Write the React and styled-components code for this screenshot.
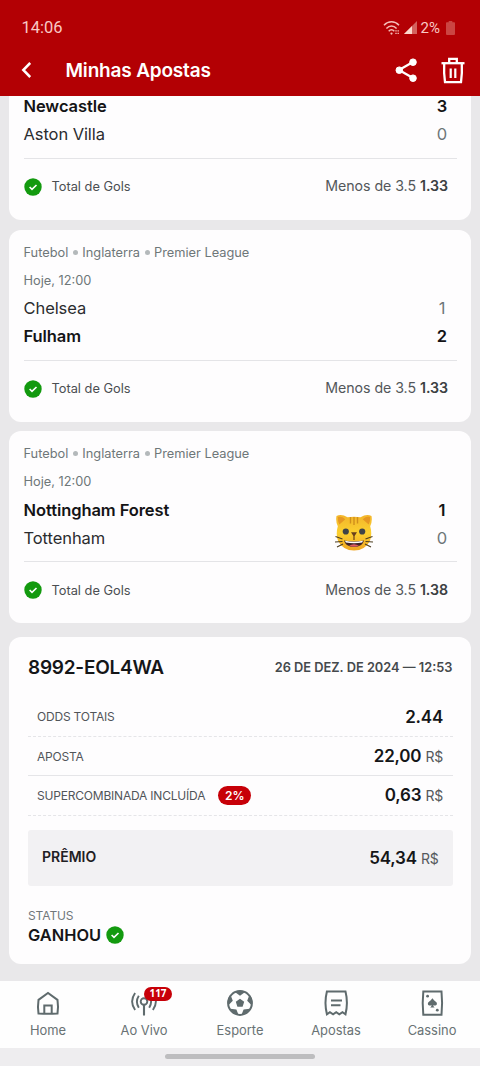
import styled, { createGlobalStyle } from "styled-components";

const GREY = "#5f6b6d";

const matches = [
  {
    id: 1,
    cut: true,
    teams: [
      { name: "Newcastle", score: 3, win: true },
      { name: "Aston Villa", score: 0 },
    ],
    odd: "1.33",
  },
  {
    id: 2,
    teams: [
      { name: "Chelsea", score: 1 },
      { name: "Fulham", score: 2, win: true },
    ],
    odd: "1.33",
  },
  {
    id: 3,
    cat: true,
    teams: [
      { name: "Nottingham Forest", score: 1, win: true },
      { name: "Tottenham", score: 0 },
    ],
    odd: "1.38",
  },
];

const App = () => {
  return (
    <Page>
      <GlobalStyle />
      <Header>
        <StatusBar>
          <Clock>14:06</Clock>
          <StatusIcons>
            <WifiIcon />
            <SignalIcon />
            <Percent>2%</Percent>
            <BatteryIcon />
          </StatusIcons>
        </StatusBar>
        <TitleBar>
          <BackIcon />
          <Title>Minhas Apostas</Title>
          <ShareIcon />
          <TrashIcon />
        </TitleBar>
      </Header>
      <Content>
        {matches.map((m) => (
          <MatchCard key={m.id} match={m} />
        ))}
        <Ticket />
      </Content>
      <BottomNav />
      <GestureArea>
        <GestureBar />
      </GestureArea>
    </Page>
  );
};

const MatchCard = ({ match }) => (
  <Card $cut={match.cut}>
    {!match.cut && (
      <>
        <Meta>
          Futebol<Dot />Inglaterra<Dot />Premier League
        </Meta>
        <Meta>Hoje, 12:00</Meta>
      </>
    )}
    {match.teams.map((t) => (
      <TeamRow key={t.name}>
        <TeamName $win={t.win}>{t.name}</TeamName>
        <Score $win={t.win}>{t.score}</Score>
      </TeamRow>
    ))}
    <Divider />
    <Market>
      <CheckIcon />
      <MarketName>Total de Gols</MarketName>
      <Pick>
        Menos de 3.5 <b>{match.odd}</b>
      </Pick>
    </Market>
    {match.cat && <CatSticker />}
  </Card>
);

const Ticket = () => (
  <TicketCard>
    <TicketHead>
      <TicketId>8992-EOL4WA</TicketId>
      <TicketDate>26 DE DEZ. DE 2024 — 12:53</TicketDate>
    </TicketHead>
    <TicketRow $line="dashed">
      <Label>ODDS TOTAIS</Label>
      <Value>2.44</Value>
    </TicketRow>
    <TicketRow $line="solid">
      <Label>APOSTA</Label>
      <Value>
        22,00 <Currency>R$</Currency>
      </Value>
    </TicketRow>
    <TicketRow $line="dashed">
      <Label>SUPERCOMBINADA INCLUÍDA</Label>
      <Bonus>2%</Bonus>
      <Value>
        0,63 <Currency>R$</Currency>
      </Value>
    </TicketRow>
    <Prize>
      <PrizeLabel>PRÊMIO</PrizeLabel>
      <Value>
        54,34 <Currency>R$</Currency>
      </Value>
    </Prize>
    <StatusLabel>STATUS</StatusLabel>
    <StatusValue>
      <span>GANHOU</span>
      <CheckIcon />
    </StatusValue>
  </TicketCard>
);

const BottomNav = () => (
  <Nav>
    <NavItem>
      <HomeIcon />
      <NavText>Home</NavText>
    </NavItem>
    <NavItem>
      <LiveIcon />
      <Badge>117</Badge>
      <NavText>Ao Vivo</NavText>
    </NavItem>
    <NavItem>
      <BallIcon />
      <NavText>Esporte</NavText>
    </NavItem>
    <NavItem>
      <ReceiptIcon />
      <NavText>Apostas</NavText>
    </NavItem>
    <NavItem>
      <CardIcon />
      <NavText>Cassino</NavText>
    </NavItem>
  </Nav>
);

/* icons */

const WifiIcon = () => (
  <svg width="17" height="16" viewBox="0 0 17 16" fill="none" stroke="#f5bcb6" strokeWidth="1.5">
    <path d="M1 5.2C5.2 .7 11.8 .7 16 5.2" />
    <path d="M3.4 8.4c3-3.2 7.2-3.2 10.2 0" />
    <path d="M5.7 11.2c1.7-1.8 3.9-1.8 5.6 0" />
    <circle cx="8.5" cy="13.6" r="1.1" fill="#f5bcb6" stroke="none" />
    <path d="M12.3 10.8h1.4M14.5 10.8h1.4M12.3 13.4h1.4M14.5 13.4h1.4" strokeWidth="1.2" />
  </svg>
);

const SignalIcon = () => (
  <svg width="13" height="13" viewBox="0 0 13 13">
    <path d="M13 0v13H0z" fill="#d4625e" />
    <path d="M8 5v8H0z" fill="#fbd9cd" />
  </svg>
);

const BatteryIcon = () => (
  <svg width="9" height="14" viewBox="0 0 9 14">
    <path d="M2.7 0h3.6v1.3h1.9q.8 0 .8.8V13q0 1-1 1H1q-1 0-1-1V2.1q0-.8.8-.8h1.9z" fill="#cb4543" />
  </svg>
);

const BackIcon = () => (
  <svg width="10" height="16" viewBox="0 0 10 16" fill="none" stroke="#fff" strokeWidth="2.5">
    <path d="M9.2 1 2.3 8l6.9 7" />
  </svg>
);

const ShareIcon = () => (
  <svg width="22" height="24" viewBox="0 0 22 24" fill="#fff" stroke="#fff">
    <path d="M18 4 4 12l14 8" fill="none" strokeWidth="2.3" />
    <circle cx="18" cy="4.2" r="3.3" />
    <circle cx="4.3" cy="12.2" r="3.3" />
    <circle cx="18" cy="20.2" r="3.3" />
  </svg>
);

const TrashIcon = () => (
  <svg width="24" height="27" viewBox="0 0 24 27" fill="none" stroke="#fff" strokeWidth="2.3">
    <path d="M.5 6.2h23" />
    <path d="M8.2 5.7V1.9h7.6v3.8" />
    <path d="M3.2 6.5q-.5 9.500.8 18.700h16q1.300-9.200.8-18.700" />
    <path d="M9.700 11.500v9.500M14.300 11.500v9.500" strokeWidth="2.2" />
  </svg>
);

const CheckIcon = () => (
  <svg width="18" height="18" viewBox="0 0 18 18">
    <circle cx="9" cy="9" r="8.700" fill="#139a0f" />
    <path d="m5.600 9 2.400 2.300 4.500-4.300" fill="none" stroke="#fff" strokeWidth="1.6" />
  </svg>
);

const HomeIcon = () => (
  <svg width="28" height="28" viewBox="0 0 28 28" fill="none" stroke={GREY} strokeWidth="2">
    <path d="M4.500 10.900 14 4l9.500 6.900q1 6.800 0 13.600-9.500.7-19 0-1-6.800 0-13.600z" />
    <path d="M10.300 24.500v-8h7.400v8" />
  </svg>
);

const LiveIcon = () => (
  <svg width="28" height="28" viewBox="0 0 28 28" fill="none" stroke={GREY} strokeWidth="1.9">
    <circle cx="14" cy="12.500" r="3.300" />
    <path d="M14 16v10.500" strokeWidth="2.1" />
    <path d="M8.800 6.700q-3.800 6 0 12M5.100 4q-6 8.500 0 17" />
    <path d="M19.200 6.700q3.800 6 0 12M22.900 4q6 8.500 0 17" />
  </svg>
);

const BallIcon = () => (
  <svg width="28" height="28" viewBox="0 0 28 28">
    <circle cx="14" cy="14" r="11.900" fill="none" stroke={GREY} strokeWidth="2" />
    <path
      d="m14 9.800 4.200 3-1.600 5h-5.200l-1.600-5zM8.500 2.700l5.500 4 5.500-4Q14 .9 8.500 2.700zM23.600 5.500l-2.400 6.300 4.600 4.700Q27.200 10.500 23.600 5.500zM23.800 19.700l-6.200.8-2.200 5.400q5.400-.7 8.400-6.200zM4.200 19.700l6.200.8 2.200 5.400q-5.400-.7-8.400-6.200zM4.400 5.500l2.400 6.300-4.600 4.700Q.8 10.500 4.400 5.500z"
      fill={GREY}
    />
  </svg>
);

const ReceiptIcon = () => (
  <svg width="28" height="28" viewBox="0 0 28 28" fill="none" stroke={GREY} strokeWidth="2">
    <path d="M4.900 2.500h18.600q2.800 11 0 22.800l-3-2.100-3.200 2.200-3.100-2.200-3.100 2.200-3.200-2.200-3 2.100q-2.800-11.800 0-22.800z" />
    <path d="M9 11.500h11M9 16.200h9.500" />
  </svg>
);

const CardIcon = () => (
  <svg width="28" height="28" viewBox="0 0 28 28">
    <path d="M5.300 2.500h18.200q1.200 11.700 0 23.300H5.300q-1.200-11.600 0-23.300z" fill="none" stroke={GREY} strokeWidth="2" />
    <path
      d="M14.400 9.200q1.400 2 3.700 3.700c2.200 2-.4 5-2.900 3.100q.2 1.600 1.400 2.500h-4.400q1.200-.9 1.400-2.500c-2.500 1.900-5.100-1.100-2.900-3.100q2.300-1.700 3.700-3.700z"
      fill={GREY}
    />
    <circle cx="9.600" cy="7.200" r="1.400" fill={GREY} />
    <circle cx="19.300" cy="21.200" r="1.400" fill={GREY} />
  </svg>
);

const CatSticker = () => (
  <CatSvg width="40" height="38" viewBox="0 0 40 38">
    <defs>
      <linearGradient id="fur" x1="0" y1="0" x2="0" y2="1">
        <stop offset="0" stopColor="#f3b52b" />
        <stop offset=".5" stopColor="#fcd02f" />
        <stop offset="1" stopColor="#f0a522" />
      </linearGradient>
    </defs>
    <path
      d="M2.500 2Q7.500-.3 13.500 3.300q6.500-1 13 0Q32.500-.3 37.500 2q1 5.500-1.300 10.300 2.300 8-.4 15Q31 36.500 20 36.500T4.200 27.300q-2.700-7-.4-15Q1.500 7.500 2.500 2z"
      fill="url(#fur)"
    />
    <path d="M4 3q4-.8 7.300 2.300L5.300 10.500Q3.500 7 4 3zM36 3q-4-.8-7.300 2.300l6 5.200Q36.500 7 36 3z" fill="#e69722" />
    <path d="M16.500 3v6.500M20 3v8M23.500 3v6.500" stroke="#d08f1c" strokeWidth="1.4" />
    <circle cx="11.800" cy="17.500" r="3.100" fill="#404347" />
    <circle cx="28.200" cy="17.500" r="3.100" fill="#404347" />
    <path d="M17 18.300h6L20.600 22v4h-1.200v-4z" fill="#69401d" />
    <path d="M10 26.500q10 2.200 20 0-1.500 6.500-10 6.500T10 26.500z" fill="#412326" />
    <path d="M11 26.800q9 2 18 0l-.8 1.700q-8.200 1.600-16.400 0z" fill="#fff" />
    <path d="M15 31.700q5-3 10 0-5 2.300-10 0z" fill="#df5b62" />
    <path
      d="M1.500 22.500 8.500 25M1 28l7.500-.5M3 33l6-3M38.500 22.500l-7 2.500M39 28l-7.500-.5M37 33l-6-3"
      stroke="#4c3d20"
      strokeWidth="1.1"
    />
  </CatSvg>
);

/* styles */

const GlobalStyle = createGlobalStyle`
  * {
    box-sizing: border-box;
  }

  body {
    margin: 0;
    font-family: Inter, "Liberation Sans", sans-serif;
    background: #e9e8ea;
  }

  svg {
    display: block;
    flex: none;
  }
`;

const Page = styled.div`
  width: 480px;
  height: 1066px;
  display: flex;
  flex-direction: column;
  overflow: hidden;
  background: #e9e8ea;
  white-space: nowrap;
`;

const Header = styled.header`
  height: 96px;
  flex: none;
  background: #b30004;
  color: #fff;
`;

const StatusBar = styled.div`
  height: 46px;
  padding: 9px 25px 0 21.5px;
  display: flex;
  align-items: center;
  justify-content: space-between;
  font-family: Roboto, sans-serif;
  color: #f9c9c5;
`;

const Clock = styled.span`
  font-size: 16.5px;
`;

const StatusIcons = styled.div`
  display: flex;
  align-items: center;
  gap: 4px;
`;

const Percent = styled.span`
  margin: 0 2px 0 0;
  font-size: 15px;
`;

const TitleBar = styled.div`
  height: 48px;
  padding: 0 15px 0 21px;
  display: flex;
  align-items: center;
`;

const Title = styled.h1`
  margin: 0 auto 0 34.5px;
  font-size: 19px;
  font-weight: 600;
  letter-spacing: -0.18px;

  & + svg {
    margin-right: 24px;
  }
`;

const Content = styled.main`
  height: 885px;
  flex: none;
  padding: 0 9px;
  display: flex;
  flex-direction: column;
  overflow: hidden;
`;

const Card = styled.section`
  position: relative;
  height: ${({ $cut }) => ($cut ? "124px" : "192px")};
  flex: none;
  margin-bottom: 9.5px;
  padding: ${({ $cut }) => ($cut ? "0 14px 0 14.5px" : "9px 14px 0 14.5px")};
  border-radius: ${({ $cut }) => ($cut ? "0 0 12px 12px" : "12px")};
  background: #fefdfe;

  & > div:first-child {
    margin-top: ${({ $cut }) => ($cut ? "-3.5px" : "0")};
  }
`;

const Meta = styled.div`
  height: 28px;
  padding-bottom: 1px;
  display: flex;
  align-items: center;
  font-size: 12.8px;
  color: #6e7779;
`;

const Dot = styled.i`
  width: 5px;
  height: 5px;
  margin: 0 4.5px;
  border-radius: 50%;
  background: #b4b9bb;
`;

const TeamRow = styled.div`
  height: 28px;
  padding: 0 8px 1px 0;
  display: flex;
  align-items: center;
  justify-content: space-between;
  font-size: 16.5px;
`;

const TeamName = styled.span`
  font-weight: ${({ $win }) => ($win ? 600 : 400)};
  letter-spacing: -0.08px;
  color: ${({ $win }) => ($win ? "#141416" : "#2b2c2f")};
`;

const Score = styled.span`
  width: 14px;
  text-align: center;
  font-weight: ${({ $win }) => ($win ? 600 : 400)};
  color: ${({ $win }) => ($win ? "#141416" : "#6e7779")};
`;

const Divider = styled.div`
  height: 1px;
  margin: 9px 0 18px;
  background: #e4e4e7;
`;

const Market = styled.div`
  height: 20px;
  padding-right: 9px;
  display: flex;
  align-items: center;
`;

const MarketName = styled.span`
  margin: 0 auto 0 10px;
  font-size: 12.8px;
  color: #4b4e52;
`;

const Pick = styled.span`
  padding-bottom: 2px;
  font-size: 14.2px;
  letter-spacing: -0.05px;
  color: #53575a;

  b {
    font-weight: 600;
    color: #3c3f42;
  }
`;

/* the sticker floats over the card */
const CatSvg = styled.svg`
  position: absolute;
  left: 325px;
  top: 83px;
`;

const TicketCard = styled.section`
  height: 327px;
  flex: none;
  margin-top: 4.5px;
  padding: 10px 18.5px 0 19px;
  border-radius: 12px;
  background: #fefdfe;
`;

const TicketHead = styled.div`
  height: 40px;
  margin-bottom: 10.5px;
  display: flex;
  align-items: center;
  justify-content: space-between;
`;

const TicketId = styled.span`
  font-size: 19px;
  font-weight: 600;
  letter-spacing: -0.25px;
  color: #151618;
`;

const TicketDate = styled.span`
  padding-top: 1px;
  font-size: 12.8px;
  font-weight: 600;
  color: #45494c;
`;

const TicketRow = styled.div`
  height: 39.4px;
  padding: 0 9.5px 0 9px;
  display: flex;
  align-items: center;
  border-bottom: 1px ${({ $line }) => $line} #e5e5e8;
`;

const Label = styled.span`
  font-size: 12px;
  letter-spacing: -0.2px;
  color: #515559;
`;

const Bonus = styled.span`
  width: 33px;
  height: 19px;
  margin-left: 13px;
  border-radius: 10px;
  background: #c70008;
  color: #fff;
  font-size: 12px;
  font-weight: 600;
  line-height: 19px;
  text-align: center;
`;

const Value = styled.span`
  margin-left: auto;
  font-size: 17px;
  font-weight: 600;
  letter-spacing: -0.2px;
  color: #151618;
`;

const Currency = styled.span`
  font-size: 14px;
  font-weight: 400;
  color: #55595c;
`;

const Prize = styled.div`
  height: 56px;
  margin-top: 14.3px;
  padding: 0 14px;
  display: flex;
  align-items: center;
  border-radius: 3px;
  background: #f2f1f3;
`;

const PrizeLabel = styled.span`
  padding-bottom: 2px;
  font-size: 14px;
  font-weight: 600;
  color: #1f2023;
`;

const StatusLabel = styled.div`
  margin-top: 22px;
  font-size: 12px;
  line-height: 16px;
  letter-spacing: -0.1px;
  color: #71777a;
`;

const StatusValue = styled.div`
  height: 23px;
  display: flex;
  align-items: center;
  gap: 5px;
  font-size: 16.4px;
  font-weight: 600;
  color: #151618;
`;

const Nav = styled.nav`
  height: 67px;
  flex: none;
  display: grid;
  grid-template-columns: repeat(5, 1fr);
  background: #fefefe;
`;

const NavItem = styled.div`
  position: relative;
  padding-top: 8px;
  display: flex;
  flex-direction: column;
  align-items: center;
`;

const NavText = styled.span`
  margin-top: 6px;
  font-size: 12.9px;
  line-height: 16px;
  color: #697274;
`;

const Badge = styled.span`
  position: absolute;
  left: 48px;
  top: 6px;
  width: 28px;
  height: 14px;
  border-radius: 7px;
  background: #c70008;
  color: #fff;
  font: bold 10px/13px "Noto Sans", sans-serif;
  text-align: center;
`;

const GestureArea = styled.footer`
  height: 18px;
  flex: none;
  padding-top: 6px;
  background: #eeedef;
`;

const GestureBar = styled.div`
  width: 150px;
  height: 5px;
  margin: 0 auto;
  border-radius: 3px;
  background: #bdbdbf;
`;

export default App;
